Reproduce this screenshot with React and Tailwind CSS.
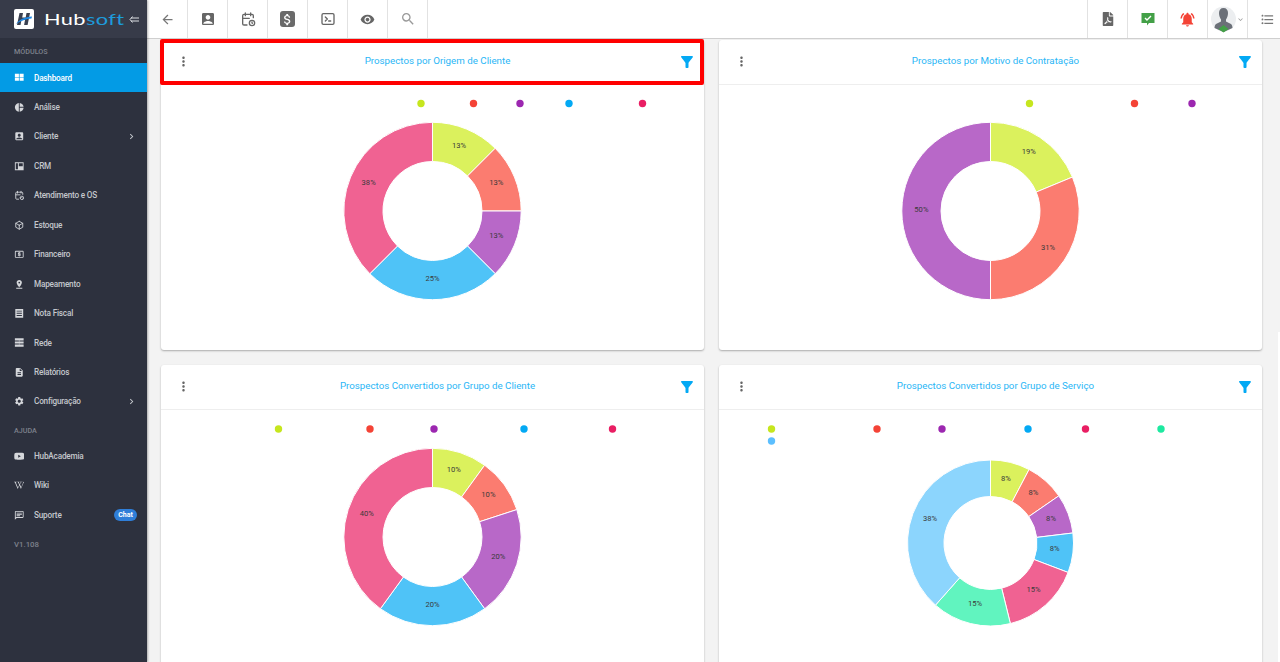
import React from "react";
import {
  MdArrowBack, MdAccountBox, MdVisibility, MdSearch, MdNotificationsActive, MdFormatListBulleted,
  MdPieChart, MdPinDrop, MdDescription, MdSettings,
  MdOutlineChat, MdChevronRight, MdKeyboardArrowDown, MdAttachMoney,
  MdOutlineLocalAtm, MdFilterAlt, MdMoreVert,
} from "react-icons/md";
import { FaWikipediaW, FaFilePdf, FaYoutube } from "react-icons/fa";
import { TbCalendarClock, TbTerminal2, TbBox } from "react-icons/tb";

const FONT = "font-['Roboto','Liberation_Sans',sans-serif]";
const L = { lime: "#c6e61e", red: "#f44336", purple: "#9c27b0", blue: "#03a9f4", pink: "#e91e63", green: "#1de9a0", sky: "#5cbfff" };
const S = { lime: "#dbf15d", red: "#fb7c70", purple: "#b868c8", blue: "#4fc3f7", pink: "#f06292", green: "#61f4bf", sky: "#8cd5fd" };

function Donut({ cx, cy, R, r, parts, dots }) {
  const total = parts.reduce((a, p) => a + p.v, 0);
  let acc = 0;
  const pt = (rad, a) => [cx + rad * Math.sin(a), cy - rad * Math.cos(a)];
  const segs = parts.map((p) => {
    const a0 = (acc / total) * Math.PI * 2;
    acc += p.v;
    const a1 = (acc / total) * Math.PI * 2;
    const [x0, y0] = pt(R, a0), [x1, y1] = pt(R, a1), [x2, y2] = pt(r, a1), [x3, y3] = pt(r, a0);
    const big = a1 - a0 > Math.PI ? 1 : 0;
    const [tx, ty] = pt((R + r) / 2, (a0 + a1) / 2);
    return { d: `M${x0} ${y0}A${R} ${R} 0 ${big} 1 ${x1} ${y1}L${x2} ${y2}A${r} ${r} 0 ${big} 0 ${x3} ${y3}Z`, tx, ty, c: S[p.c], label: p.label };
  });
  return (
    <svg className="block w-full h-full" viewBox="0 0 543 265">
      {dots.map(([x, y, c], i) => <circle key={i} cx={x} cy={y} r="3.7" fill={L[c]} />)}
      {segs.map((s, i) => <path key={i} d={s.d} fill={s.c} stroke="#fff" strokeWidth="1" />)}
      {segs.map((s, i) => (
        <text key={i} x={s.tx} y={s.ty + 0.5} textAnchor="middle" fontSize="7.6" fill="#3a3a3a" fontFamily="Roboto, sans-serif">{s.label}</text>
      ))}
    </svg>
  );
}

function Card({ title, highlight, chart }) {
  return (
    <div className="relative bg-white rounded-[3px] h-[310px] shadow-[0_1px_2px_rgba(0,0,0,0.3)]">
      <div className="flex items-center h-[45px] pb-[1px] border-b border-[#eeeeee]">
        <div className="w-[44px] flex justify-center text-[#666] text-[15px]"><MdMoreVert /></div>
        <div className="flex-1 text-center text-[9.75px] text-[#29b6f6] whitespace-nowrap">{title}</div>
        <div className="w-[34px] flex justify-center text-[#03a9f4] text-[18px]"><MdFilterAlt /></div>
      </div>
      <div className="h-[265px]">
        <Donut {...chart} />
      </div>
      {highlight && <div className="absolute -left-px -top-px w-[544px] h-[46px] border-[4px] border-[#ff0000] rounded-[2px]" />}
    </div>
  );
}

const Svg = ({ children }) => <svg width="1em" height="1em" viewBox="0 0 12 12" fill="currentColor">{children}</svg>;
const DashIcon = () => <Svg><path d="M1 2h4.600v3.600H1zM6.400 2H11v3.600H6.400zM1 6.400h4.600V10H1zM6.400 6.400H11V10H6.400z" /></Svg>;
const CrmIcon = () => <Svg><path fillRule="evenodd" d="M1 1.500h10v9H1zM2 2.500v7h2.500v-7zm3.500 0v3.500h4.500V2.500z" /></Svg>;
const NotaIcon = () => <Svg><path fillRule="evenodd" d="M1.500 1h9v10h-9zM3 3v1h6V3zm0 2.500v1h6v-1zM3 8v1h6V8z" /></Svg>;
const RedeIcon = () => <Svg><path d="M1 1.500h10v2.500H1zM1 5h10v2.500H1zM1 8.500h10V11H1z" /><path d="M5.500 4h1v1h-1zM5.500 7.500h1v1h-1z" /></Svg>;

const items = [
  [DashIcon, "Dashboard", false, true],
  [MdPieChart, "Análise"],
  [MdAccountBox, "Cliente", true],
  [CrmIcon, "CRM"],
  [TbCalendarClock, "Atendimento e OS"],
  [TbBox, "Estoque"],
  [MdOutlineLocalAtm, "Financeiro"],
  [MdPinDrop, "Mapeamento"],
  [NotaIcon, "Nota Fiscal"],
  [RedeIcon, "Rede"],
  [MdDescription, "Relatórios"],
  [MdSettings, "Configuração", true],
];

function Item({ icon: Icon, label, arrow, active, badge }) {
  return (
    <div className={`flex items-center h-[29.45px] ${active ? "bg-[#039be5] text-white" : "text-[#c4c7cc]"}`}>
      <div className={`w-[34px] flex justify-center pl-[4px] text-[10.5px] ${active ? "text-white" : "text-[#d5d7db]"}`}><Icon /></div>
      <span className="flex-1 text-[8.2px] tracking-[-0.2px] font-medium whitespace-nowrap">{label}</span>
      {arrow && <MdChevronRight className="mr-[10px] text-[11px]" />}
      {badge && <span className="mr-[10px] w-[23px] h-[12px] rounded-full bg-[#2f7ed8] text-white text-[7px] font-bold flex items-center justify-center">{badge}</span>}
    </div>
  );
}

function Logo() {
  return (
    <svg width="20" height="20" viewBox="0 0 20 20" className="shrink-0">
      <rect width="20" height="20" rx="2" fill="#fff" />
      <path d="M5.500 4h3.500l-.8 4.500h3.500L12.500 4H16l-2.400 12h-3.500l.9-5H7.500l-1 5H3z" fill="#3a4050" />
      <path d="M2 15C6 10 11 8 18 7.500l-.5 2C12 10 7 11.500 2 15z" fill="#1e88e5" />
    </svg>
  );
}

function Avatar() {
  return (
    <svg width="25" height="27" viewBox="0 0 25 27">
      <circle cx="12.500" cy="13" r="12.500" fill="#eceef0" />
      <path d="M12.500 2c3 0 4.500 2 4.500 5 0 3-1 5-2 6.500v2l5 2.500c1 1 1.500 2.500 1.500 4l-9 4-9-4c0-1.500.5-3 1.500-4l5-2.500v-2C9 12 8 10 8 7c0-3 1.500-5 4.500-5z" fill="#6b7078" />
      <path d="M12.500 19l5 4-5 3.500-5-3.500z" fill="#43a047" />
    </svg>
  );
}

function ChatCheck() {
  return (
    <svg width="14" height="15" viewBox="0 0 14 15">
      <path d="M0.500 1h13v10H8l-2 2.500V11H0.500z" fill="#43a047" />
      <path d="M4 6l2 2 4-4" fill="none" stroke="#fff" strokeWidth="1.400" />
    </svg>
  );
}

function TopBtn({ children, className = "w-[40px]" }) {
  return <div className={`${className} h-full flex items-center justify-center border-r border-[#e2e2e2] text-[#666]`}>{children}</div>;
}
function TopBtnR({ children, className = "w-[40px]" }) {
  return <div className={`${className} h-full flex items-center justify-center border-l border-[#e2e2e2] text-[#666]`}>{children}</div>;
}

const p1 = [{ v: 1, c: "lime", label: "13%" }, { v: 1, c: "red", label: "13%" }, { v: 1, c: "purple", label: "13%" }, { v: 2, c: "blue", label: "25%" }, { v: 3, c: "pink", label: "38%" }];
const p2 = [{ v: 3, c: "lime", label: "19%" }, { v: 5, c: "red", label: "31%" }, { v: 8, c: "purple", label: "50%" }];
const p3 = [{ v: 1, c: "lime", label: "10%" }, { v: 1, c: "red", label: "10%" }, { v: 2, c: "purple", label: "20%" }, { v: 2, c: "blue", label: "20%" }, { v: 4, c: "pink", label: "40%" }];
const p4 = [{ v: 1, c: "lime", label: "8%" }, { v: 1, c: "red", label: "8%" }, { v: 1, c: "purple", label: "8%" }, { v: 1, c: "blue", label: "8%" }, { v: 2, c: "pink", label: "15%" }, { v: 2, c: "green", label: "15%" }, { v: 5, c: "sky", label: "38%" }];

export default function App() {
  return (
    <div className={`relative flex h-[662px] w-[1280px] overflow-hidden bg-[#f3f3f3] ${FONT}`}>
      <aside className="w-[147px] shrink-0 bg-[#2d313e] shadow-[1px_0_2px_rgba(0,0,0,0.3)] z-10 flex flex-col">
        <div className="h-[38px] bg-[#373b49] flex items-center pl-[14px] shrink-0">
          <Logo />
          <span className="ml-[10px] w-[80px] shrink-0 block origin-left scale-x-[1.36] text-[16px] leading-none tracking-[0.3px] font-['Lato',sans-serif] text-white whitespace-nowrap">Hub<span className="text-[#1e9bdc]">soft</span></span>
          <svg width="10" height="7" viewBox="0 0 10 7" className="ml-[5px] shrink-0" fill="none" stroke="#dcdfe3" strokeWidth="1">
            <path d="M10 2H2M10 5H2M3.500 .5L1 3.500l2.500 3" />
          </svg>
        </div>
        <div className="h-[25px] flex items-center pl-[14px] pt-[4px] text-[7.2px] font-medium text-[#7d818c]">MÓDULOS</div>
        {items.map(([Icon, label, arrow, active]) => (
          <Item key={label} icon={Icon} label={label} arrow={arrow} active={active} />
        ))}
        <div className="h-[25px] flex items-center pl-[14px] pt-[6px] text-[7.2px] font-medium text-[#7d818c]">AJUDA</div>
        <Item icon={FaYoutube} label="HubAcademia" />
        <Item icon={FaWikipediaW} label="Wiki" />
        <Item icon={MdOutlineChat} label="Suporte" badge="Chat" />
        <div className="h-[29px] flex items-center pl-[14px] pt-[2px] text-[7.8px] font-medium text-[#7d818c]">V1.108</div>
      </aside>
      <div className="flex-1 min-w-0 flex flex-col">
        <header className="h-[39px] shrink-0 bg-white border-b border-[#cfcfcf] flex justify-between">
          <div className="flex h-full">
            <TopBtn className="w-[41px]"><MdArrowBack className="text-[15px] text-[#777]" /></TopBtn>
            <TopBtn><MdAccountBox className="text-[16px]" /></TopBtn>
            <TopBtn><TbCalendarClock className="text-[16px]" /></TopBtn>
            <TopBtn><span className="w-[15px] h-[16px] rounded-[3px] bg-[#6a6a6a] flex items-center justify-center text-white text-[15px]"><MdAttachMoney /></span></TopBtn>
            <TopBtn><TbTerminal2 className="text-[16px]" /></TopBtn>
            <TopBtn><MdVisibility className="text-[15px]" /></TopBtn>
            <TopBtn><MdSearch className="text-[16px] text-[#999]" /></TopBtn>
          </div>
          <div className="flex h-full">
            <TopBtnR><FaFilePdf className="text-[14px]" /></TopBtnR>
            <TopBtnR><ChatCheck /></TopBtnR>
            <TopBtnR><MdNotificationsActive className="text-[17px] text-[#f44336]" /></TopBtnR>
            <TopBtnR>
              <Avatar />
              <MdKeyboardArrowDown className="text-[9px] text-[#999]" />
            </TopBtnR>
            <TopBtnR className="w-[33px] pl-[6px]"><MdFormatListBulleted className="text-[15px] text-[#777]" /></TopBtnR>
          </div>
        </header>
        <main className="grid grid-cols-[543px_543px] gap-x-[15px] gap-y-[15px] pl-[14px] pt-[1px]">
          <Card title="Prospectos por Origem de Cliente" highlight chart={{ cx: 271.5, cy: 126, R: 88.7, r: 49.5, parts: p1, dots: [[260, 18.500, "lime"], [312.500, 18.500, "red"], [359, 18.500, "purple"], [408, 18.500, "blue"], [481.500, 18.500, "pink"]] }} />
          <Card title="Prospectos por Motivo de Contratação" chart={{ cx: 271.5, cy: 126, R: 88.7, r: 49.5, parts: p2, dots: [[310.500, 18.500, "lime"], [415.500, 18.500, "red"], [473, 18.500, "purple"]] }} />
          <Card title="Prospectos Convertidos por Grupo de Cliente" chart={{ cx: 271.5, cy: 127, R: 88.7, r: 49.5, parts: p3, dots: [[117.500, 19, "lime"], [209, 19, "red"], [273, 19, "purple"], [363, 19, "blue"], [451.500, 19, "pink"]] }} />
          <Card title="Prospectos Convertidos por Grupo de Serviço" chart={{ cx: 271.5, cy: 133, R: 83, r: 46.5, parts: p4, dots: [[52.500, 19, "lime"], [158, 19, "red"], [223, 19, "purple"], [309, 19, "blue"], [366.500, 19, "pink"], [442, 19, "green"], [52.500, 31, "sky"]] }} />
        </main>
      </div>
      <div className="absolute right-0 top-[332px] bottom-0 w-[2px] bg-white" />
    </div>
  );
}
